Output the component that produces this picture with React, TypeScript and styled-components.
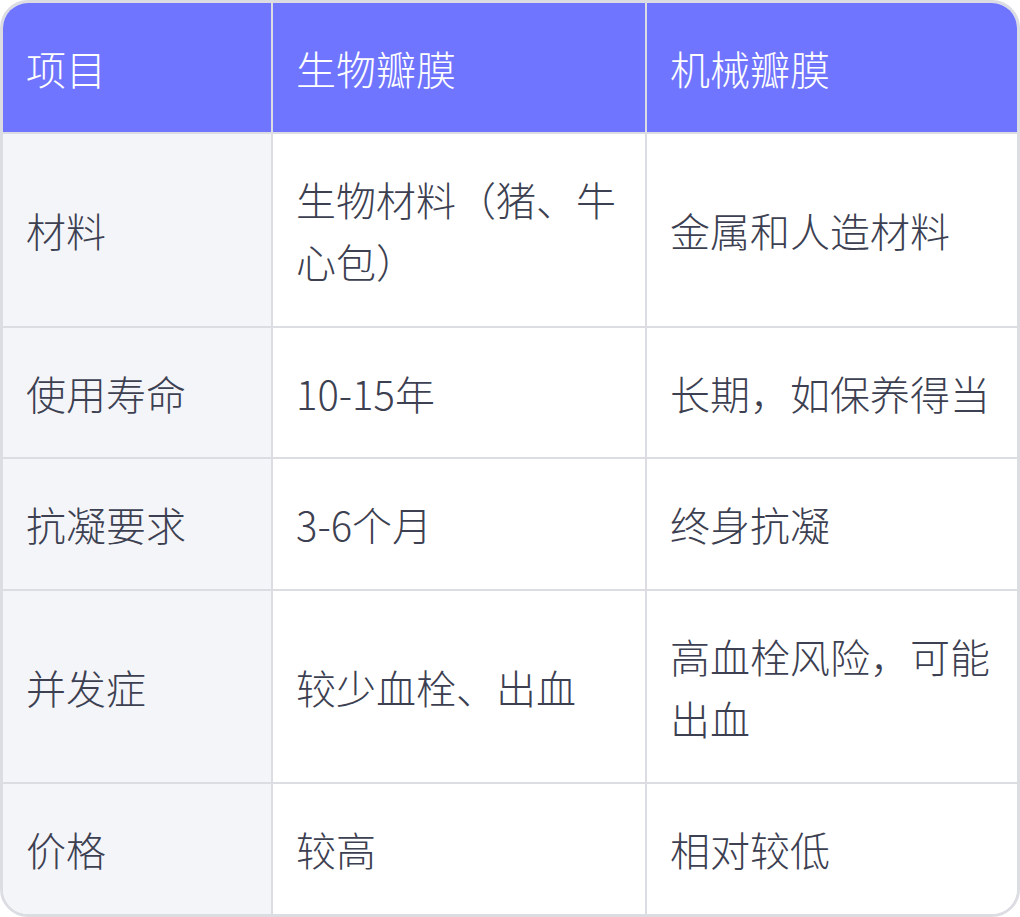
import React from "react";
import styled, { createGlobalStyle } from "styled-components";

const GlobalStyle = createGlobalStyle`
  body {
    margin: 0;
    background: #ffffff;
    font-family: "Noto Sans CJK SC", "Noto Sans", sans-serif;
  }
`;

const Frame = styled.div`
  width: 1020px;
  box-sizing: border-box;
  border: 3px solid #dcdde3;
  border-radius: 28px;
  overflow: hidden;
`;

const Table = styled.table`
  width: 100%;
  border-collapse: separate;
  border-spacing: 0;
  table-layout: fixed;
  font-size: 40px;
  font-weight: 300;
  line-height: 62px;
  color: #3c4051;
`;

const HeadCell = styled.th`
  background: #7075ff;
  color: #ffffff;
  font-weight: 300;
  text-align: left;
  padding: 34px 23px 33px;
  border-right: 2px solid #dcdde3;
  border-bottom: 2px solid #dcdde3;

  &:last-child {
    border-right: none;
  }
`;

const Cell = styled.td<{ $label?: boolean }>`
  background: ${(p) => (p.$label ? "#f4f5f9" : "#ffffff")};
  padding: 34px 23px 33.6px;
  vertical-align: middle;
  border-right: 2px solid #dcdde3;
  border-bottom: 2px solid #dcdde3;

  &:last-child {
    border-right: none;
  }

  tr:last-child > & {
    border-bottom: none;
  }
`;

const rows = [
  ["材料", "生物材料（猪、牛心包）", "金属和人造材料"],
  ["使用寿命", "10-15年", "长期，如保养得当"],
  ["抗凝要求", "3-6个月", "终身抗凝"],
  ["并发症", "较少血栓、出血", "高血栓风险，可能出血"],
  ["价格", "较高", "相对较低"],
];

export default function App() {
  return (
    <>
      <GlobalStyle />
      <Frame>
        <Table>
          <colgroup>
            <col style={{ width: 270 }} />
            <col style={{ width: 374 }} />
            <col />
          </colgroup>
          <thead>
            <tr>
              <HeadCell>项目</HeadCell>
              <HeadCell>生物瓣膜</HeadCell>
              <HeadCell>机械瓣膜</HeadCell>
            </tr>
          </thead>
          <tbody>
            {rows.map((r) => (
              <tr key={r[0]}>
                <Cell $label>{r[0]}</Cell>
                <Cell>{r[1]}</Cell>
                <Cell>{r[2]}</Cell>
              </tr>
            ))}
          </tbody>
        </Table>
      </Frame>
    </>
  );
}
